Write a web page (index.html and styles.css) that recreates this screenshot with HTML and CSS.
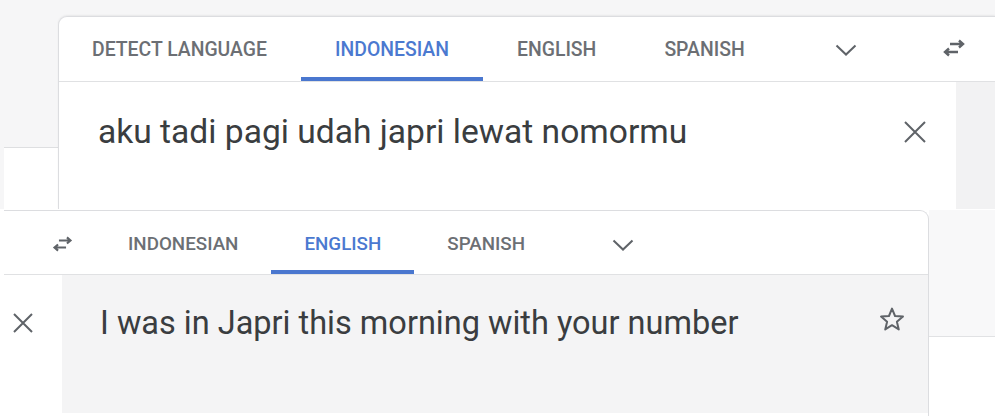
FILE: index.html
```html
<!DOCTYPE html>
<html lang="en">
<head>
<meta charset="utf-8">
<title>Translate</title>
<link rel="stylesheet" href="styles.css">
</head>
<body>
<div class="shot">
  <section class="top">
    <div class="side-left">
      <div class="side-gray"></div>
      <div class="side-white"></div>
    </div>
    <div class="card card-src">
      <div class="tabs tabs-src">
        <span class="tab">DETECT LANGUAGE</span>
        <span class="tab active">INDONESIAN</span>
        <span class="tab">ENGLISH</span>
        <span class="tab">SPANISH</span>
        <span class="icon-btn chev">
          <svg width="22" height="12" viewBox="0 0 22 12"><polyline points="1.5,1.5 11,10.5 20.5,1.5" fill="none" stroke="#5f6368" stroke-width="2"/></svg>
        </span>
        <span class="icon-btn swap">
          <svg width="26" height="18" viewBox="0 0 26 18"><path d="M9 5h13M18 1.5l4 3.5-4 3.5M17 13H4M8 9.5L4 13l4 3.5" fill="none" stroke="#5f6368" stroke-width="2.4"/></svg>
        </span>
      </div>
      <div class="body body-src">
        <div class="input">
          <p class="text">aku tadi pagi udah japri lewat nomormu</p>
          <svg class="close" width="22" height="22" viewBox="0 0 22 22"><path d="M1 1L21 21M21 1L1 21" stroke="#5f6368" stroke-width="2"/></svg>
        </div>
        <div class="gutter"></div>
      </div>
    </div>
    <div class="side-right"></div>
  </section>
  <section class="bottom">
    <div class="card card-tgt">
      <div class="tabs tabs-tgt">
        <span class="icon-btn swap2">
          <svg width="25" height="16" viewBox="0 0 26 18"><path d="M9 5h13M18 1.5l4 3.5-4 3.5M17 13H4M8 9.5L4 13l4 3.5" fill="none" stroke="#5f6368" stroke-width="2.4"/></svg>
        </span>
        <span class="tab t2">INDONESIAN</span>
        <span class="tab t2 active">ENGLISH</span>
        <span class="tab t2">SPANISH</span>
        <span class="icon-btn chev2">
          <svg width="22" height="12" viewBox="0 0 22 12"><polyline points="1.5,1.5 11,10.5 20.5,1.5" fill="none" stroke="#5f6368" stroke-width="2"/></svg>
        </span>
      </div>
      <div class="body body-tgt">
        <div class="clear-col">
          <svg width="20" height="20" viewBox="0 0 20 20"><path d="M1 1L19 19M19 1L1 19" stroke="#5f6368" stroke-width="2"/></svg>
        </div>
        <div class="output">
          <p class="text text-out">I was in Japri this morning with your number</p>
          <svg class="star" width="28" height="27" viewBox="0 0 24 23"><path d="M12 2.2l2.6 6.3 6.8.5-5.2 4.4 1.6 6.6L12 16.4 6.2 20l1.6-6.6L2.6 9l6.8-.5z" fill="none" stroke="#5f6368" stroke-width="1.7" stroke-linejoin="round"/></svg>
        </div>
      </div>
    </div>
    <div class="side-right2">
      <div class="r-gray"></div>
      <div class="r-white"></div>
    </div>
  </section>
</div>
</body>
</html>
```

FILE: styles.css
```css
* { box-sizing: border-box; }
html, body { margin: 0; padding: 0; }
body {
  width: 1000px;
  height: 416px;
  overflow: hidden;
  background: #ffffff;
  font-family: Roboto, "Liberation Sans", Arial, sans-serif;
}
.shot { display: flex; flex-direction: column; width: 1000px; height: 416px; }

.top {
  height: 209px;
  display: flex;
  background: #f6f6f7;
  padding-left: 4px;
}
.side-left { width: 54px; display: flex; flex-direction: column; }
.side-gray { height: 148px; border-bottom: 1px solid #dedfe1; }
.side-white { flex: 1; background: #ffffff; }

.card { background: #ffffff; display: flex; flex-direction: column; }
.card-src {
  flex: 1;
  margin-top: 16px;
  border-top: 1px solid #dcdde0;
  border-left: 1px solid #dcdde0;
  border-top-left-radius: 9px;
  box-shadow: 0 -1px 2px rgba(0,0,0,0.06);
}
.side-right { width: 5px; background: #ffffff; }

.tabs {
  display: flex;
  align-items: stretch;
  border-bottom: 1px solid #e0e1e3;
}
.tabs-src { height: 65px; }
.tab {
  display: flex;
  align-items: center;
  padding: 0 34px;
  font-size: 19.4px;
  font-weight: 500;
  color: #6c6f74;
  border-bottom: 4px solid transparent;
  padding-top: 4px;
}
.tabs-src .tab:first-child { padding-left: 33px; }
.tab.active { color: #4b79d0; border-bottom-color: #4a77cf; }
.icon-btn { display: flex; align-items: center; justify-content: center; }
.chev { width: 134px; padding-top: 1px; }
.swap { margin-left: 28px; width: 26px; padding-bottom: 2px; }

.body { flex: 1; display: flex; }
.input {
  flex: 1;
  display: flex;
  align-items: flex-start;
  padding: 30px 30px 0 39px;
}
.text {
  margin: 0;
  flex: 1;
  font-size: 33.6px;
  line-height: 40px;
  color: #3a3d40;
}
.close { margin-top: 9px; }
.gutter { width: 39px; background: #f2f2f3; }

.bottom {
  flex: 1;
  display: flex;
  padding-left: 4px;
  padding-right: 5px;
}
.card-tgt {
  width: 925px;
  border-top: 1px solid #dcdde0;
  border-right: 1px solid #dcdde0;
  border-top-right-radius: 9px;
  margin-top: 1px;
}
.tabs-tgt { height: 64px; }
.swap2 { width: 91px; padding-left: 46px; padding-top: 2px; justify-content: flex-start; }
.t2 { font-size: 18.8px; padding: 7px 33px 0; }
.chev2 { width: 152px; padding-left: 54px; justify-content: flex-start; padding-top: 4px; }

.body-tgt { height: 138px; flex: none; }
.clear-col {
  width: 58px;
  background: #ffffff;
  display: flex;
  justify-content: flex-start;
  padding: 38px 0 0 9px;
}
.output {
  flex: 1;
  background: #f4f4f5;
  display: flex;
  align-items: flex-start;
  padding: 28px 22px 0 38px;
}
.text-out { font-size: 32.5px; }
.star { margin-top: 3px; }

.side-right2 { flex: 1; display: flex; flex-direction: column; margin-top: 1px; }
.r-gray { height: 127px; background: #f8f8f9; border-bottom: 1px solid #e1e2e4; }
.r-white { flex: 1; background: #ffffff; }
```
